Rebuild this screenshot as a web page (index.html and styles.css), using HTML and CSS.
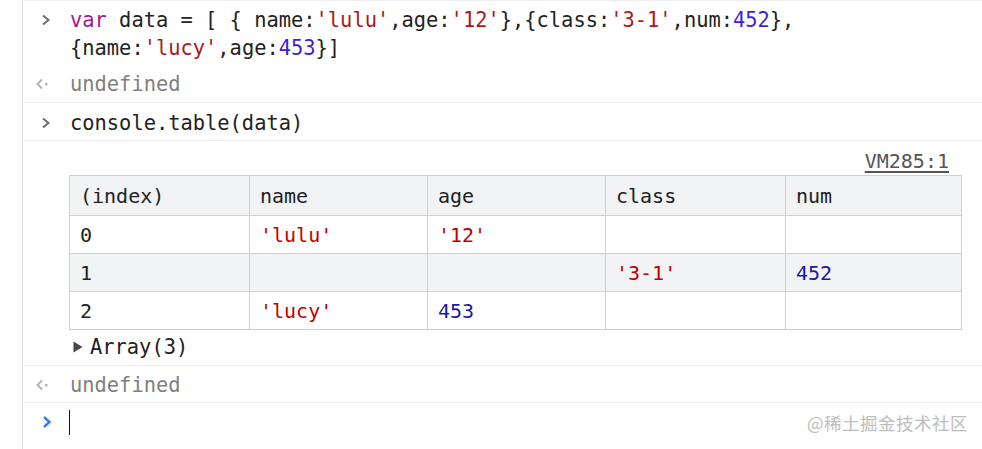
FILE: index.html
```html
<!DOCTYPE html>
<html lang="zh">
<head>
<meta charset="utf-8">
<link rel="stylesheet" href="styles.css">
<title>Console</title>
</head>
<body>
<div class="console">
  <div class="entry entry-first">
    <div class="msg">
      <span class="icon"><svg width="10" height="12" viewBox="0 0 10 12"><polyline points="2,1.5 7.5,6 2,10.5" fill="none" stroke="#6e6e6e" stroke-width="2"/></svg></span>
      <div class="text">
        <div class="line"><span class="kw">var</span> data = [ { name:<span class="str">'lulu'</span>,age:<span class="str">'12'</span>},{class:<span class="str">'3-1'</span>,num:<span class="num">452</span>},</div>
        <div class="line">{name:<span class="str">'lucy'</span>,age:<span class="num">453</span>}]</div>
      </div>
    </div>
    <div class="msg result">
      <span class="icon"><svg width="14" height="12" viewBox="0 0 14 12"><polyline points="6,1.5 1.5,6 6,10.5" fill="none" stroke="#b4b4b4" stroke-width="2"/><rect x="9" y="5" width="2.5" height="2.5" fill="#b4b4b4"/></svg></span>
      <div class="text"><div class="line undef">undefined</div></div>
    </div>
  </div>

  <div class="entry entry-cmd">
    <div class="msg">
      <span class="icon"><svg width="10" height="12" viewBox="0 0 10 12"><polyline points="2,1.5 7.5,6 2,10.5" fill="none" stroke="#6e6e6e" stroke-width="2"/></svg></span>
      <div class="text"><div class="line">console.table(data)</div></div>
    </div>
  </div>

  <div class="entry entry-table">
    <div class="source"><span class="link">VM285:1</span></div>
    <table class="tbl">
      <colgroup>
        <col class="c1"><col class="c2"><col class="c3"><col class="c4"><col class="c5">
      </colgroup>
      <thead>
        <tr><th>(index)</th><th>name</th><th>age</th><th>class</th><th>num</th></tr>
      </thead>
      <tbody>
        <tr><td>0</td><td class="s">'lulu'</td><td class="s">'12'</td><td></td><td></td></tr>
        <tr class="odd"><td>1</td><td></td><td></td><td class="s">'3-1'</td><td class="n">452</td></tr>
        <tr><td>2</td><td class="s">'lucy'</td><td class="n">453</td><td></td><td></td></tr>
      </tbody>
    </table>
    <div class="arr"><svg width="10" height="12" viewBox="0 0 10 12"><polygon points="0.5,0.5 9.5,6 0.5,11.5" fill="#474747"/></svg><span>Array(3)</span></div>
  </div>

  <div class="entry entry-undef">
    <div class="msg result">
      <span class="icon"><svg width="14" height="12" viewBox="0 0 14 12"><polyline points="6,1.5 1.5,6 6,10.5" fill="none" stroke="#b4b4b4" stroke-width="2"/><rect x="9" y="5" width="2.5" height="2.5" fill="#b4b4b4"/></svg></span>
      <div class="text"><div class="line undef">undefined</div></div>
    </div>
  </div>

  <div class="entry entry-prompt">
    <div class="msg">
      <span class="icon"><svg width="10" height="14" viewBox="0 0 10 14"><polyline points="2,2 7.5,7 2,12" fill="none" stroke="#3b7be4" stroke-width="2.4"/></svg></span>
      <div class="text"><div class="line"><span class="caret"></span></div></div>
    </div>
    <div class="watermark">@稀土掘金技术社区</div>
  </div>
</div>
</body>
</html>
```

FILE: styles.css
```css
html, body {
  margin: 0;
  padding: 0;
  background: #ffffff;
}

body {
  width: 982px;
  height: 449px;
  overflow: hidden;
  font-family: "DejaVu Sans Mono", "Liberation Mono", monospace;
  font-size: 20.4px;
  color: #222222;
}

.console {
  margin-left: 22px;
  height: 449px;
  border-left: 1px solid #dddddd;
  border-top: 1px solid #eeeeee;
  position: relative;
}

.entry {
  border-bottom: 1px solid #efefef;
}

.msg {
  display: flex;
  align-items: flex-start;
}

.icon {
  width: 47px;
  height: 28px;
  flex: none;
  display: flex;
  align-items: center;
  padding-left: 18px;
  box-sizing: border-box;
}

.result .icon {
  padding-left: 13px;
}

.line {
  line-height: 28px;
  height: 28px;
  white-space: pre;
}

.kw { color: #a3178f; }
.str { color: #a81a1a; }
.num { color: #3a1fdc; }
.undef { color: #7f7f7f; }

.entry-first {
  padding: 5px 0 4px;
}

.entry-first .result {
  margin-top: 8px;
}

.entry-cmd {
  padding: 6px 0 3px;
}

.entry-table {
  padding: 6px 0 4px;
}

.source {
  display: flex;
  justify-content: flex-end;
  padding-right: 33px;
  line-height: 28px;
  height: 28px;
  font-size: 20px;
}

.link {
  color: #555555;
  text-decoration: underline;
  text-underline-offset: 3px;
}

.tbl {
  margin-left: 46px;
  width: 892px;
  table-layout: fixed;
  border-collapse: collapse;
  font-size: 20px;
}

.tbl .c1 { width: 180px; }
.tbl .c2 { width: 178px; }
.tbl .c3 { width: 178px; }
.tbl .c4 { width: 180px; }
.tbl .c5 { width: 176px; }

.tbl th,
.tbl td {
  border: 1px solid #cfcfcf;
  text-align: left;
  font-weight: normal;
  padding: 0 0 0 10px;
  height: 37px;
  white-space: pre;
  color: #222222;
}

.tbl th {
  background: #f1f3f4;
  height: 39px;
}

.tbl tr.odd td {
  background: #f1f3f4;
}

.tbl td.s { color: #c20000; }
.tbl td.n { color: #1a1aa6; }

.arr {
  display: flex;
  align-items: center;
  gap: 7px;
  margin-left: 50px;
  margin-top: 3px;
  line-height: 28px;
  height: 28px;
}

.entry-undef {
  padding: 5px 0 3px;
}

.entry-prompt {
  padding: 5px 0 0;
  border-bottom: none;
}

.entry-prompt .icon {
  padding-left: 19px;
}

.caret {
  display: inline-block;
  width: 1px;
  height: 25px;
  background: #111111;
  vertical-align: -6px;
  margin-left: -1px;
}

.watermark {
  position: absolute;
  right: 14px;
  bottom: 15px;
  font-family: "Noto Sans CJK SC", sans-serif;
  font-size: 17.5px;
  color: #bdbdbd;
  letter-spacing: 0.5px;
}
```
